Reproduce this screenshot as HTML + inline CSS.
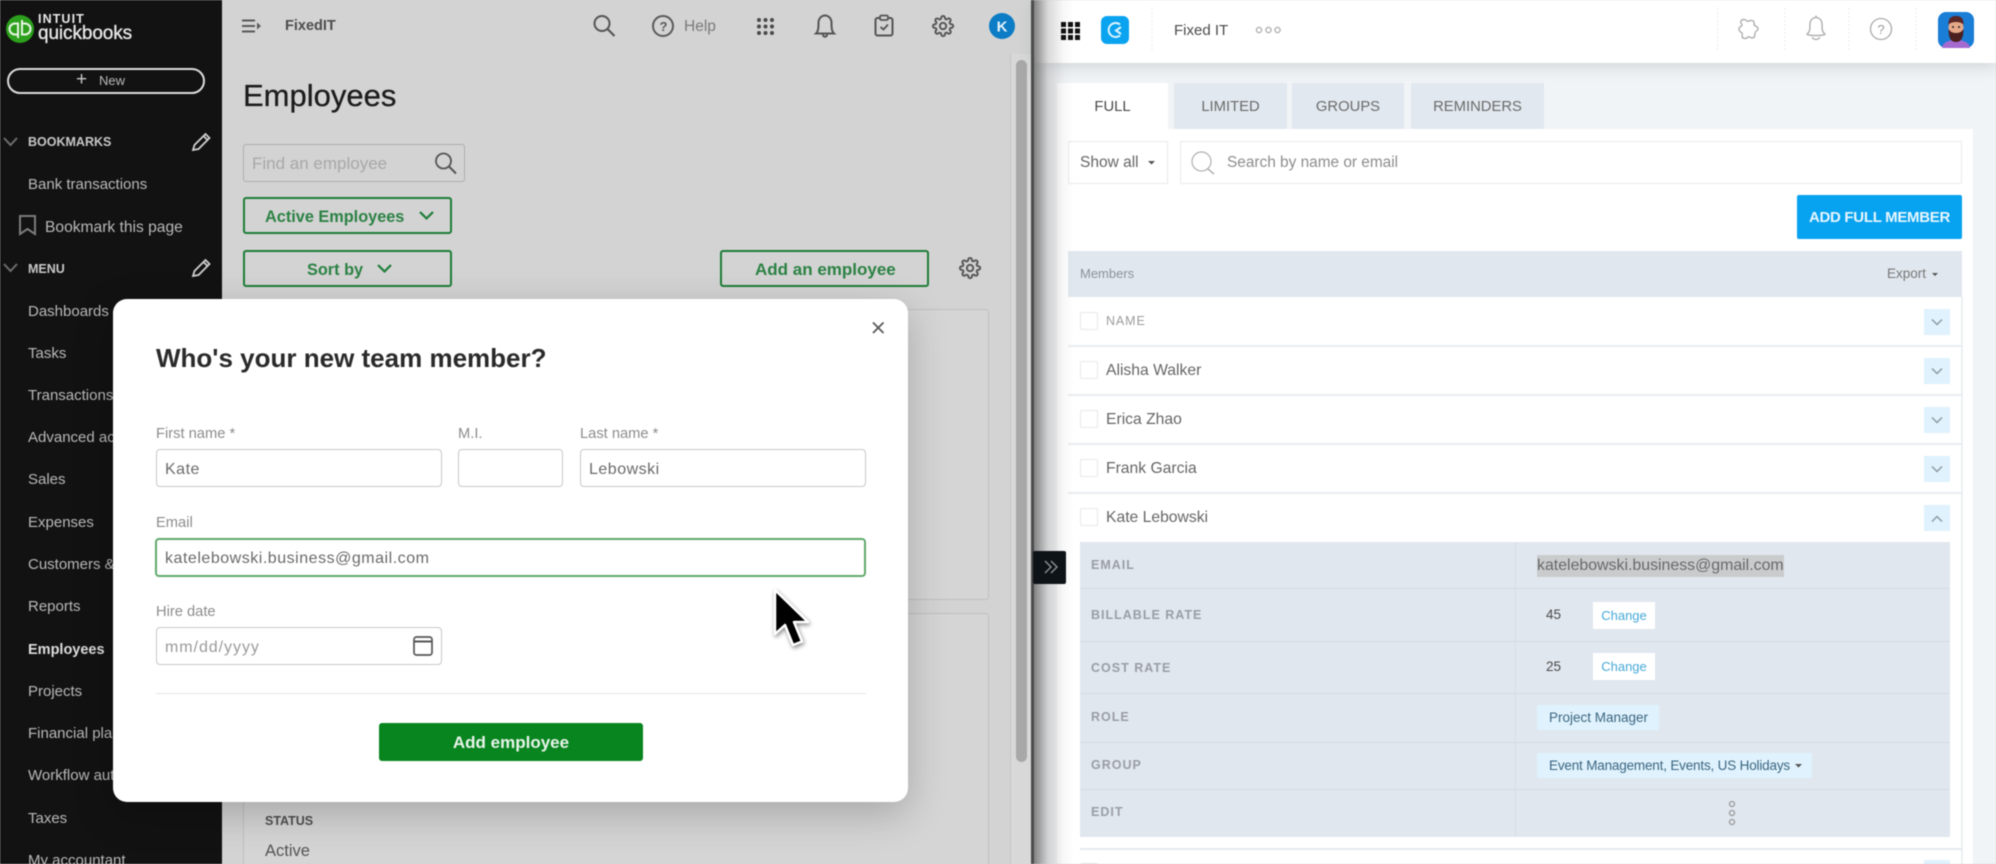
<!DOCTYPE html>
<html><head><meta charset="utf-8"><title>Employees</title>
<style>
html,body{margin:0;padding:0;width:1996px;height:864px;overflow:hidden;background:#d2d2d2}
#r{position:relative;width:1996px;height:864px;overflow:hidden;font-family:"Liberation Sans",sans-serif;filter:blur(.45px)}
.b{position:absolute;box-sizing:border-box}
.t{position:absolute;white-space:nowrap;height:20px;line-height:20px;margin-top:1px}
.m0{margin-top:0}
.s{color:#b9b9b9;font-size:15px;left:28px}
.g{border:2px solid #1d7d37;border-radius:3px;color:#2c8244;font-weight:bold;font-size:15.5px}
.l{color:#8c8c8c;font-size:14.7px}
.i{border:1.5px solid #c8c8c8;border-radius:4px;background:#fff}
.v{color:#6a6a6a;font-size:16px;letter-spacing:.5px}
.tab{background:#e1e8ef;color:#6b6b6b;font-size:14.8px;text-align:center;line-height:48px;top:83px;height:46px}
.n{left:1106px;color:#666;font-size:15.7px}
.cb{left:1080px;width:18px;height:18px;border:1.5px solid #e6e8ea;border-radius:2px;background:#fff}
.ln{left:1068px;width:894px;height:2px;background:#e9edf0}
.ch{left:1924px;width:26px;height:26px;background:#e0f2fd}
.el{left:1091px;color:#9a9ea3;font-size:12.5px;font-weight:bold;letter-spacing:1px}
.sep{left:1080px;width:870px;height:1px;background:#d3dce5}
.chg{left:1593px;width:62px;height:27px;background:#fff;color:#46a9d8;font-size:13px;text-align:center;line-height:27px}
.chip{left:1537px;height:25px;background:#e0f2fd;color:#3b6681;font-size:13.5px;line-height:25px;padding-left:12px}
</style></head><body><div id="r">

<!-- left app background -->
<div class="b" style="left:221px;top:0;width:811px;height:864px;background:#d3d3d3"></div>
<div class="b" style="left:243px;top:309px;width:746px;height:291px;background:#d5d5d5;border:1.5px solid #bfbfbf;border-radius:3px"></div>
<div class="b" style="left:243px;top:613px;width:746px;height:260px;background:#d5d5d5;border:1.5px solid #bfbfbf;border-radius:3px"></div>
<div class="b" style="left:1010px;top:54px;width:22px;height:810px;background:#d8d8d8;border-left:1px solid #c6c6c6"></div>
<div class="b" style="left:1016px;top:60px;width:11px;height:702px;background:#a8a8a8;border-radius:6px"></div>

<!-- sidebar -->
<div class="b" style="left:0;top:0;width:222px;height:864px;background:#121212"></div>
<div class="t m0" style="left:38px;top:9px;color:#e8e8e8;font-size:12.5px;font-weight:bold;letter-spacing:1.1px">INTUIT</div>
<div class="t m0" style="left:38px;top:24px;color:#e8e8e8;font-size:19px;letter-spacing:-.1px;-webkit-text-stroke:.35px #e8e8e8">quickbooks</div>
<div class="b" style="left:7px;top:68px;width:198px;height:26px;border:2px solid #dcdcdc;border-radius:13px"></div>
<div class="t m0" style="left:76px;top:70px;color:#c9c9c9;font-size:19px;font-weight:normal">+</div>
<div class="t m0" style="left:99px;top:71px;color:#b9b9b9;font-size:13px">New</div>
<div class="t m0" style="left:28px;top:132px;color:#c8c8c8;font-size:12.5px;font-weight:bold">BOOKMARKS</div>
<div class="t s" style="top:174px">Bank transactions</div>
<div class="t s" style="left:45px;top:217px;font-size:15.6px">Bookmark this page</div>
<div class="t" style="left:28px;top:258px;color:#c8c8c8;font-size:12.5px;font-weight:bold">MENU</div>
<div class="t s" style="top:301px">Dashboards</div>
<div class="t s" style="top:343px">Tasks</div>
<div class="t s" style="top:385px">Transactions</div>
<div class="t s" style="top:427px">Advanced accounting</div>
<div class="t s" style="top:469px">Sales</div>
<div class="t s" style="top:512px">Expenses</div>
<div class="t s" style="top:554px">Customers &amp; leads</div>
<div class="t s m0" style="top:597px">Reports</div>
<div class="t s" style="top:639px;color:#dedede;font-weight:bold;font-size:14.5px">Employees</div>
<div class="t s" style="top:681px">Projects</div>
<div class="t s" style="top:723px">Financial planning</div>
<div class="t s" style="top:765px">Workflow automation</div>
<div class="t s" style="top:808px">Taxes</div>
<div class="t s" style="top:850px">My accountant</div>

<!-- main -->
<div class="t m0" style="left:285px;top:16px;color:#4d4d4d;font-size:14.5px;font-weight:bold">FixedIT</div>
<div class="t" style="left:684px;top:16px;color:#7a7a7a;font-size:15.5px">Help</div>
<div class="t m0" style="left:243px;top:85px;height:22px;line-height:22px;color:#1c1c1c;font-size:31px;-webkit-text-stroke:.3px #1c1c1c">Employees</div>
<div class="b" style="left:243px;top:144px;width:222px;height:38px;border:1.5px solid #aeaeae;border-radius:3px"></div>
<div class="t" style="left:252px;top:153px;color:#a8a8a8;font-size:17px">Find an employee</div>
<div class="b g" style="left:243px;top:197px;width:209px;height:37px"></div>
<div class="t" style="left:265px;top:206px;color:#2c8244;font-size:16.3px;font-weight:bold">Active Employees</div>
<div class="b g" style="left:243px;top:250px;width:209px;height:37px"></div>
<div class="t" style="left:307px;top:259px;color:#2c8244;font-size:16.3px;font-weight:bold">Sort by</div>
<div class="b g" style="left:720px;top:250px;width:209px;height:37px"></div>
<div class="t" style="left:755px;top:259px;color:#2c8244;font-size:17px;font-weight:bold">Add an employee</div>
<div class="t m0" style="left:265px;top:811px;color:#505050;font-size:12.5px;font-weight:bold">STATUS</div>
<div class="t" style="left:265px;top:840px;color:#555;font-size:16.5px">Active</div>

<!-- dialog -->
<div class="b" style="left:113px;top:299px;width:795px;height:503px;background:#fff;border-radius:14px;box-shadow:0 12px 40px rgba(0,0,0,.22)"></div>
<div class="t m0" style="left:156px;top:348px;color:#2a2a2a;font-size:26px;font-weight:bold">Who's your new team member?</div>
<div class="t l" style="left:156px;top:423px">First name *</div>
<div class="t l" style="left:458px;top:423px">M.I.</div>
<div class="t l" style="left:580px;top:423px">Last name *</div>
<div class="b i" style="left:156px;top:449px;width:286px;height:38px"></div>
<div class="b i" style="left:458px;top:449px;width:105px;height:38px"></div>
<div class="b i" style="left:580px;top:449px;width:286px;height:38px"></div>
<div class="t v" style="left:165px;top:459px">Kate</div>
<div class="t v" style="left:589px;top:459px">Lebowski</div>
<div class="t l" style="left:156px;top:512px">Email</div>
<div class="b" style="left:155px;top:538px;width:711px;height:39px;border:2px solid #62a96c;border-radius:4px;background:#fff"></div>
<div class="t v" style="left:165px;top:548px;letter-spacing:.52px">katelebowski.business@gmail.com</div>
<div class="t l" style="left:156px;top:601px">Hire date</div>
<div class="b i" style="left:156px;top:627px;width:286px;height:38px"></div>
<div class="t v" style="left:165px;top:637px;color:#9a9a9a;letter-spacing:.95px">mm/dd/yyyy</div>
<div class="b" style="left:156px;top:693px;width:710px;height:1px;background:#e6e6e6"></div>
<div class="b" style="left:379px;top:723px;width:264px;height:38px;background:#08851f;border-radius:3px;color:#e8f4ea;font-size:17px;font-weight:bold;text-align:center;line-height:40px">Add employee</div>

<!-- right panel -->
<div class="b" style="left:1034px;top:0;width:962px;height:864px;background:#f1f4f6"></div>
<div class="b" style="left:1034px;top:0;width:962px;height:63px;background:#fff;box-shadow:0 3px 14px rgba(120,130,140,.3)"></div>
<div class="t" style="left:1174px;top:20px;color:#4a4a4a;font-size:15px">Fixed IT</div>
<div class="b tab" style="left:1057px;width:111px;background:#fff;color:#4a4a4a">FULL</div>
<div class="b tab" style="left:1174px;width:113px">LIMITED</div>
<div class="b tab" style="left:1292px;width:112px">GROUPS</div>
<div class="b tab" style="left:1411px;width:133px">REMINDERS</div>
<div class="b" style="left:1057px;top:129px;width:916px;height:735px;background:#fff"></div>
<div class="b" style="left:1068px;top:141px;width:100px;height:43px;border:1.5px solid #e8eaec;background:#fff"></div>
<div class="t" style="left:1080px;top:152px;color:#666;font-size:15.5px">Show all</div>
<div class="b" style="left:1180px;top:141px;width:782px;height:43px;border:1.5px solid #e8eaec;background:#fff"></div>
<div class="t" style="left:1227px;top:152px;color:#8d8d8d;font-size:15.4px">Search by name or email</div>
<div class="b" style="left:1797px;top:195px;width:165px;height:44px;background:#07a2f0;border-radius:2px;color:#e8f6fe;font-size:15px;font-weight:bold;text-align:center;line-height:46px;letter-spacing:-.3px">ADD FULL MEMBER</div>
<div class="b" style="left:1068px;top:251px;width:894px;height:46px;background:#e0e7ee"></div>
<div class="t m0" style="left:1080px;top:264px;color:#8d9298;font-size:13px">Members</div>
<div class="t m0" style="left:1887px;top:264px;color:#777;font-size:13.5px">Export</div>

<div class="b" style="left:1961px;top:297px;width:1.5px;height:567px;background:#eceff2"></div>
<div class="b ln" style="top:345px"></div><div class="b ln" style="top:394px"></div>
<div class="b ln" style="top:443px"></div><div class="b ln" style="top:492px"></div>
<div class="b cb" style="top:312px"></div><div class="b cb" style="top:361px"></div>
<div class="b cb" style="top:410px"></div><div class="b cb" style="top:459px"></div><div class="b cb" style="top:508px"></div>
<div class="t m0" style="left:1106px;top:311px;color:#9b9b9b;font-size:12.5px;letter-spacing:.9px">NAME</div>
<div class="t n" style="top:360px">Alisha Walker</div>
<div class="t n" style="top:409px">Erica Zhao</div>
<div class="t n" style="top:458px">Frank Garcia</div>
<div class="t n" style="top:507px">Kate Lebowski</div>
<div class="b ch" style="top:309px"></div><div class="b ch" style="top:358px"></div>
<div class="b ch" style="top:407px"></div><div class="b ch" style="top:456px"></div><div class="b ch" style="top:505px"></div>

<div class="b" style="left:1080px;top:542px;width:870px;height:295px;background:#e0e7ef"></div>
<div class="b" style="left:1515px;top:542px;width:1px;height:295px;background:#d6dee6"></div>
<div class="b sep" style="top:588px"></div><div class="b sep" style="top:641px"></div>
<div class="b sep" style="top:693px"></div><div class="b sep" style="top:742px"></div><div class="b sep" style="top:789px"></div>
<div class="t el m0" style="top:555px">EMAIL</div>
<div class="t el" style="top:604px">BILLABLE RATE</div>
<div class="t el" style="top:657px">COST RATE</div>
<div class="t el m0" style="top:707px">ROLE</div>
<div class="t el m0" style="top:755px">GROUP</div>
<div class="t el m0" style="top:802px">EDIT</div>
<div class="b" style="left:1537px;top:555px;width:247px;height:22px;background:#c9cbcd"></div>
<div class="t m0" style="left:1537px;top:556px;color:#696969;font-size:15.9px">katelebowski.business@gmail.com</div>
<div class="t m0" style="left:1546px;top:605px;color:#4a4a4a;font-size:13.5px">45</div>
<div class="t m0" style="left:1546px;top:657px;color:#4a4a4a;font-size:13.5px">25</div>
<div class="b chg" style="top:602px">Change</div>
<div class="b chg" style="top:653px">Change</div>
<div class="b chip" style="top:705px;width:122px">Project Manager</div>
<div class="b chip" style="top:753px;width:275px;letter-spacing:-.18px">Event Management, Events, US Holidays</div>
<div class="b" style="left:1080px;top:848px;width:882px;height:1.5px;background:#e6eaee"></div>
<div class="b cb" style="top:863px"></div>
<div class="b ch" style="top:860px"></div>

<!-- panel shadow & divider -->
<div class="b" style="left:1034px;top:0;width:40px;height:864px;background:linear-gradient(90deg,rgba(110,110,110,.85),rgba(170,170,170,.45) 35%,rgba(200,200,200,.12) 75%,rgba(255,255,255,0))"></div>
<div class="b" style="left:1031px;top:0;width:3px;height:864px;background:#4c4c4c"></div>
<div class="b" style="left:1033px;top:551px;width:33px;height:33px;background:#0e1318;border-radius:2px"></div>

<!-- icons -->
<svg width="1996" height="864" viewBox="0 0 1996 864" style="position:absolute;left:0;top:0" fill="none">
<defs>
<path id="gr" d="M19.4 15a1.65 1.65 0 0 0 .33 1.82l.06.06a2 2 0 0 1 0 2.83 2 2 0 0 1-2.83 0l-.06-.06a1.65 1.65 0 0 0-1.82-.33 1.65 1.65 0 0 0-1 1.51V21a2 2 0 0 1-2 2 2 2 0 0 1-2-2v-.09A1.65 1.65 0 0 0 9 19.4a1.65 1.65 0 0 0-1.82.33l-.06.06a2 2 0 0 1-2.83 0 2 2 0 0 1 0-2.83l.06-.06a1.65 1.65 0 0 0 .33-1.82 1.65 1.65 0 0 0-1.51-1H3a2 2 0 0 1-2-2 2 2 0 0 1 2-2h.09A1.65 1.65 0 0 0 4.6 9a1.65 1.65 0 0 0-.33-1.82l-.06-.06a2 2 0 0 1 0-2.83 2 2 0 0 1 2.83 0l.06.06a1.65 1.65 0 0 0 1.82.33H9a1.65 1.65 0 0 0 1-1.51V3a2 2 0 0 1 2-2 2 2 0 0 1 2 2v.09a1.65 1.65 0 0 0 1 1.51 1.65 1.65 0 0 0 1.82-.33l.06-.06a2 2 0 0 1 2.83 0 2 2 0 0 1 0 2.83l-.06.06a1.65 1.65 0 0 0-.33 1.82V9a1.65 1.65 0 0 0 1.51 1H21a2 2 0 0 1 2 2 2 2 0 0 1-2 2h-.09a1.65 1.65 0 0 0-1.51 1z"/>
</defs>
<!-- qb logo -->
<circle cx="20" cy="29" r="14" fill="#2ca01c"/>
<path d="M18 38V23.500h-3a5.500 5.500 0 0 0 0 11h2M22 20v14.500h3a5.500 5.500 0 0 0 0-11h-2" stroke="#e8f5e6" stroke-width="2"/>
<!-- sidebar chevrons & pencils -->
<path d="M4 138l6.500 7 6.500-7M4 264l6.500 7 6.500-7" stroke="#6d6d6d" stroke-width="2"/>
<path d="M194 149l1.500-5 11-11 4 4-11 11zM204.500 135l4 4" stroke="#cfcfcf" stroke-width="1.800" transform="translate(-1 1)"/>
<path d="M194 149l1.500-5 11-11 4 4-11 11zM204.500 135l4 4" stroke="#cfcfcf" stroke-width="1.800" transform="translate(-1 127)"/>
<path d="M20 216h15v18l-7.500-5-7.500 5z" stroke="#7b7b7b" stroke-width="2"/>
<!-- header -->
<path d="M242 20.500h13M242 26h13M242 31.500h13" stroke="#5a5a5a" stroke-width="2"/><path d="M257 22.500l4 3.500-4 3.500z" fill="#5a5a5a"/>
<circle cx="602" cy="23.500" r="7.500" stroke="#555" stroke-width="2"/><path d="M607.500 29l7 7" stroke="#555" stroke-width="2.200"/>
<circle cx="663" cy="26" r="10" stroke="#5a5a5a" stroke-width="2"/>
<text x="659.500" y="31" font-family="Liberation Sans" font-size="13" font-weight="bold" fill="#5a5a5a">?</text>
<g fill="#4a4a4a"><circle cx="759" cy="20" r="2"/><circle cx="765.500" cy="20" r="2"/><circle cx="772" cy="20" r="2"/><circle cx="759" cy="26.500" r="2"/><circle cx="765.500" cy="26.500" r="2"/><circle cx="772" cy="26.500" r="2"/><circle cx="759" cy="33" r="2"/><circle cx="765.500" cy="33" r="2"/><circle cx="772" cy="33" r="2"/></g>
<path d="M834 33.500c-2-2-2.500-4-2.500-11a6.500 7 0 0 0-13 0c0 7-.5 9-2.500 11zM823 33.500v1.200a2 2 0 0 0 4 0v-1.200M825 15.500v-1" stroke="#555" stroke-width="2"/>
<rect x="875.500" y="18" width="17" height="17.500" rx="2" stroke="#555" stroke-width="2"/><rect x="880" y="15.500" width="8" height="4.500" rx="1.500" fill="#d3d3d3" stroke="#555" stroke-width="1.800"/><path d="M880.500 27l3 2.500 4.500-5" stroke="#555" stroke-width="1.800"/>
<g transform="translate(932 15) scale(.92)" stroke="#555" stroke-width="2.100"><use href="#gr"/><circle cx="12" cy="12" r="3.500"/></g>
<circle cx="1002" cy="26" r="13" fill="#0b7cc5"/>
<text x="1002" y="31.500" text-anchor="middle" font-family="Liberation Sans" font-size="15" font-weight="bold" fill="#e8f3fa">K</text>
<g transform="translate(959 257) scale(.92)" stroke="#555" stroke-width="2.100"><use href="#gr"/><circle cx="12" cy="12" r="3.500"/></g>
<!-- find/search, chevrons -->
<circle cx="443.500" cy="161" r="7.500" stroke="#555" stroke-width="1.800"/><path d="M449 166.500l7 7" stroke="#555" stroke-width="2"/>
<path d="M420 212l6.500 6.500 6.500-6.500" stroke="#1d7d37" stroke-width="2.200"/>
<path d="M378 265l6.500 6.500 6.500-6.500" stroke="#1d7d37" stroke-width="2.200"/>
<!-- close -->
<path d="M873 322.500l10.500 10.500M883.500 322.500l-10.500 10.500" stroke="#555" stroke-width="1.700"/>
<!-- calendar -->
<rect x="414" y="637" width="18" height="18" rx="2.500" stroke="#555" stroke-width="1.700"/><path d="M414 641.500h18" stroke="#555" stroke-width="2"/>
<!-- cursor -->
<path d="M775 590v44l10-9 8 20 9-3.500-8-19.500h14z" fill="#000" stroke="#fff" stroke-width="2.500" stroke-linejoin="round" style="filter:drop-shadow(1px 2px 2px rgba(0,0,0,.45))"/>
<!-- collapse arrows -->
<path d="M1051 561l6 6-6 6M1045 561l6 6-6 6" stroke="#8e9396" stroke-width="1.400"/>
<!-- right header -->
<g fill="#111"><rect x="1061" y="22" width="5" height="5"/><rect x="1068" y="22" width="5" height="5"/><rect x="1075" y="22" width="5" height="5"/><rect x="1061" y="28.500" width="5" height="5"/><rect x="1068" y="28.500" width="5" height="5"/><rect x="1075" y="28.500" width="5" height="5"/><rect x="1061" y="35" width="5" height="5"/><rect x="1068" y="35" width="5" height="5"/><rect x="1075" y="35" width="5" height="5"/></g>
<rect x="1101" y="16" width="28" height="28" rx="6" fill="#0aa3ef"/>
<path d="M1120 24.500a7 7 0 1 0 0 11M1121 27l-5 3.500 5 3.500" stroke="#dff4ff" stroke-width="2"/>
<path d="M1152 8v42" stroke="#eee" stroke-dasharray="2 2"/>
<g stroke="#aaa" stroke-width="1.300"><circle cx="1259" cy="30" r="2.600"/><circle cx="1268.500" cy="30" r="2.600"/><circle cx="1277.500" cy="30" r="2.600"/></g>
<path d="M1717.500 8v44M1785 8v44M1849 8v44M1916 8v44" stroke="#e9e9e9" stroke-dasharray="2 2"/>
<path d="M1741 21c2-3 5-1 6 0 2 1 4-2 6 0 2 1 1 3 1 4 1 1 4 1 4 4 0 2-3 2-3 4 0 2 0 5-3 5-2 0-3-2-4-1-1 1-3 2-5 1-2-1 0-4-1-5-1-1-3-1-3-4s3-2 3-4c0-1-2-2-1-4z" stroke="#a9a9a9" stroke-width="1.300"/>
<path d="M1825 34c-3-2-3-5-3-10a6 6.500 0 0 0-12 0c0 5 0 8-3 10 0 2 18 2 18 0zM1812.500 37a3.500 2.500 0 0 0 7 0M1816 17.500v-2" stroke="#a9a9a9" stroke-width="1.300"/>
<circle cx="1881" cy="29" r="10.500" stroke="#aaa" stroke-width="1.300"/>
<text x="1881" y="34" text-anchor="middle" font-family="Liberation Sans" font-size="13" fill="#999">?</text>
<rect x="1938" y="12" width="36" height="36" rx="8" fill="#1a7ed6"/>
<path d="M1942 48c1-6 7-8 14-8s13 2 14 8z" fill="#a56ad0"/>
<ellipse cx="1956" cy="28" rx="7.500" ry="10" fill="#e5a98a"/>
<path d="M1948.500 29c0 10 3 13 7.500 13s7.500-3 7.500-13c-2 3-4 4-7.500 4s-5.500-1-7.500-4z" fill="#4b2020"/>
<path d="M1948.500 25c-.5-7 3-9 7.500-9s8 2 7.500 9c-2-4-13-4-15 0z" fill="#5a2626"/>
<circle cx="1953" cy="27" r="1" fill="#222"/><circle cx="1959" cy="27" r="1" fill="#222"/>
<!-- search right -->
<circle cx="1201.500" cy="161.500" r="9.500" stroke="#b0b0b0" stroke-width="1.200"/><path d="M1208 169l6 5" stroke="#b0b0b0" stroke-width="1.500"/>
<path d="M1148 161h7l-3.500 3.500zM1932 273h6l-3 3zM1795 764h7l-3.500 3.500z" fill="#555"/>
<!-- row chevrons -->
<g stroke="#8f9aa3" stroke-width="1.500">
<path d="M1932 319.500l5 5 5-5M1932 368.500l5 5 5-5M1932 417.500l5 5 5-5M1932 466.500l5 5 5-5M1932 521.500l5-5 5 5"/>
</g>
<!-- kebab -->
<g stroke="#9a9a9a" stroke-width="1.300"><circle cx="1732" cy="804" r="2.500"/><circle cx="1732" cy="813" r="2.500"/><circle cx="1732" cy="822" r="2.500"/></g>
</svg>
</div></body></html>
